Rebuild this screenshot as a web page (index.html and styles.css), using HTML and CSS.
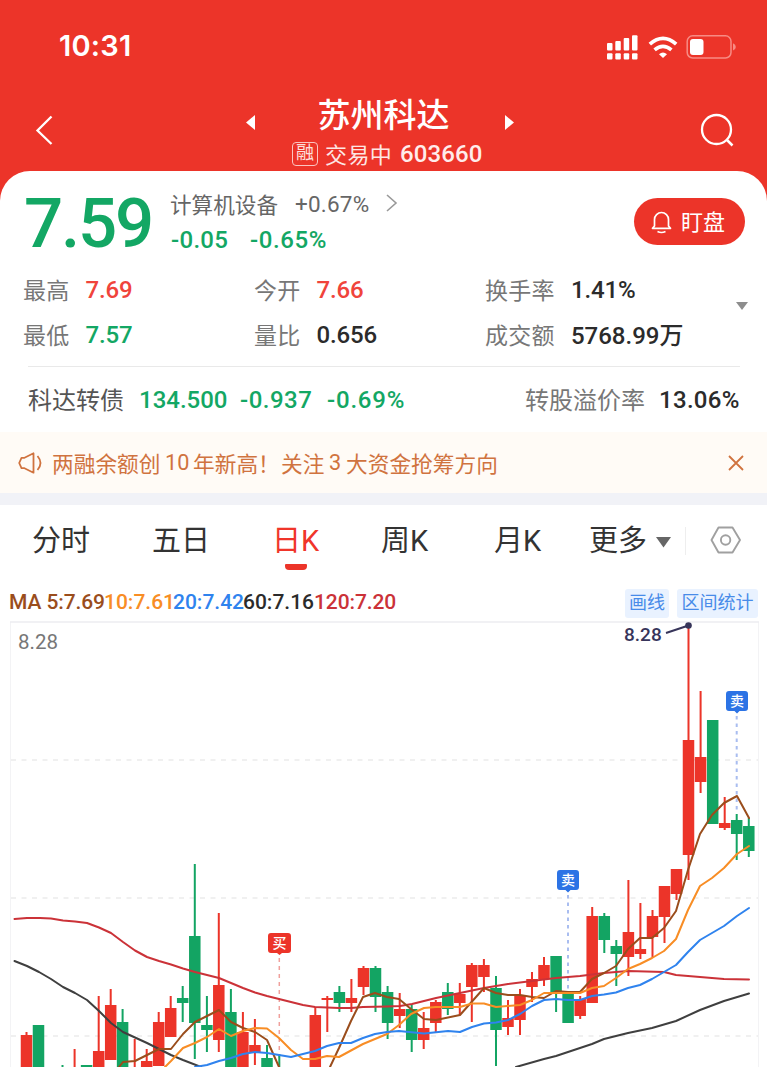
FILE: index.html
```
<!DOCTYPE html>
<html lang="zh-CN">
<head>
<meta charset="utf-8">
<title>苏州科达 603660</title>
<link rel="stylesheet" href="styles.css">
</head>
<body>
<div class="top">
  <div class="status">
    <span class="time">10:31</span>
    <svg class="status-icons" width="132" height="28" viewBox="604 32 132 28">
      <g fill="#fff">
        <rect x="607" y="42" width="5.5" height="7.5" rx="1"/><rect x="615.3" y="40" width="5.5" height="9.5" rx="1"/><rect x="623.7" y="37" width="5.5" height="12.5" rx="1"/><rect x="632" y="34.3" width="5.5" height="15.2" rx="1"/>
        <rect x="607" y="52.3" width="5.5" height="6.2" rx="1"/><rect x="615.3" y="52.3" width="5.5" height="6.2" rx="1"/><rect x="623.7" y="52.3" width="5.5" height="6.2" rx="1"/><rect x="632" y="52.3" width="5.5" height="6.2" rx="1"/>
        <path d="M659 53.2q4-3.4 8 0L663 57z"/>
        <rect x="690" y="38" width="13.5" height="16" rx="3"/>
      </g>
      <path d="M649.8 43.2q13.2-11.6 26.4 0M654.6 48.8q8.4-7 16.8 0" fill="none" stroke="#fff" stroke-width="3.7"/>
      <rect x="687.2" y="34.8" width="43.8" height="22.2" rx="5.5" fill="none" stroke="#f78b84" stroke-width="1.5"/>
      <path d="M733 42.3q2.8 1 2.8 3.6t-2.8 3.6z" fill="#f78b84"/>
    </svg>
  </div>
  <div class="nav">
    <svg class="back" width="20" height="32" viewBox="0 0 20 32"><path d="M16.500 2.500L2.500 16.500L16.500 30" fill="none" stroke="#fff" stroke-width="2.3"/></svg>
    <svg class="prev" width="9" height="16" viewBox="0 0 9 16"><path d="M9 0v15L0 7.500z" fill="#fff"/></svg>
    <div class="title">
      <div class="name">苏州科达</div>
      <div class="sub"><span class="badge">融</span><span class="state">交易中</span><span class="code">603660</span></div>
    </div>
    <svg class="next" width="9" height="16" viewBox="0 0 9 16"><path d="M0 0v15L9 7.500z" fill="#fff"/></svg>
    <svg class="search" width="34" height="34" viewBox="0 0 34 34"><circle cx="16.500" cy="16.500" r="14.500" fill="none" stroke="#fff" stroke-width="2.300"/><path d="M26.500 26.500l6 6" stroke="#fff" stroke-width="2.500"/></svg>
  </div>
  <div class="card">
    <div class="quote">
      <span class="price">7.59</span>
      <div class="info">
        <div class="line"><span class="sector">计算机设备</span><span class="sector-pct">+0.67%</span><svg class="more-arrow" width="12" height="18" viewBox="0 0 12 18"><path d="M1 1l9 8-9 8" fill="none" stroke="#999" stroke-width="1.600"/></svg></div>
        <div class="line green"><span class="chg">-0.05</span><span class="pct">-0.65%</span></div>
      </div>
      <div class="watch">
        <svg width="21" height="24" viewBox="0 0 21 24" fill="none" stroke="#fff" stroke-width="1.700"><path d="M3.500 16V9.500a7 7 0 0 1 14 0V16l2 2.300h-18z" stroke-linejoin="round"/><path d="M6.500 21.500q4 2 8 0"/></svg>
        <span class="watch-text">盯盘</span>
      </div>
    </div>
    <div class="stats">
      <div class="stat"><span class="lab">最高</span><span class="val red">7.69</span></div>
      <div class="stat"><span class="lab">今开</span><span class="val red">7.66</span></div>
      <div class="stat"><span class="lab">换手率</span><span class="val">1.41%</span></div>
      <div class="stat"><span class="lab">最低</span><span class="val green">7.57</span></div>
      <div class="stat"><span class="lab">量比</span><span class="val">0.656</span></div>
      <div class="stat"><span class="lab">成交额</span><span class="val amount">5768.99万</span></div>
      <svg class="expand" width="12" height="8" viewBox="0 0 12 8"><path d="M0 0h12L6 8z" fill="#8d8d8d"/></svg>
    </div>
    <div class="bond">
      <span class="bond-name">科达转债</span><span class="green b1">134.500</span><span class="green b2">-0.937</span><span class="green b3">-0.69%</span>
      <span class="premium">转股溢价率</span><span class="b4">13.06%</span>
    </div>
  </div>
</div>
<div class="notice">
  <svg class="horn" width="25" height="22" viewBox="0 0 25 22" fill="none" stroke="#d0733f" stroke-width="1.800" stroke-linejoin="round"><path d="M3.500 5.800h3L15.500 1.300v19.400L6.500 16.200h-3L1.200 11z"/><path d="M19.500 4q6 7 0 14"/></svg>
  <span class="notice-a">两融余额创</span><span class="notice-n">10</span><span class="notice-b">年新高！</span><span class="notice-c">关注</span><span class="notice-m">3</span><span class="notice-d">大资金抢筹方向</span>
  <svg class="close" width="16" height="16" viewBox="0 0 16 16"><path d="M1 1l14 14M15 1L1 15" stroke="#d0733f" stroke-width="1.800"/></svg>
</div>
<div class="tabs">
  <span class="tab t1">分时</span><span class="tab t2">五日</span><span class="tab t3 active">日K</span><span class="tab t4">周K</span><span class="tab t5">月K</span><span class="tab t6">更多</span>
  <svg class="caret" width="15" height="11" viewBox="0 0 15 11"><path d="M0 0h15L7.500 10.500z" fill="#666"/></svg>
  <i class="sep"></i>
  <svg class="gear" width="32" height="28" viewBox="0 0 32 28" fill="none" stroke="#a0a0a0" stroke-width="1.900" stroke-linejoin="round"><path d="M8.500 1.500h14L30 14l-7.500 12.500h-14L1.500 14z"/><circle cx="15.600" cy="14" r="4.700"/></svg>
</div>
<div class="ma">
  <span class="m5">MA 5:7.69</span><span class="m10">10:7.61</span><span class="m20">20:7.42</span><span class="m60">60:7.16</span><span class="m120">120:7.20</span>
  <span class="chip c1">画线</span><span class="chip c2">区间统计</span>
</div>
<svg class="chart" width="768" height="449" viewBox="0 618 768 449" fill="none">
  <path d="M10.500 1067V622M758.500 1067V622" stroke="#f3f3f5"/>
  <path d="M10 622H759" stroke="#ededf0" stroke-width="1.500"/>
  <path d="M11 760H758M11 898H758M11 1036H758" stroke="#ececec" stroke-width="1.500" stroke-dasharray="5 5.500"/>
  <path class="dash-buy" d="M279.300 958V1067"/>
  <path class="dash-sell" d="M568 895V992M736.700 716V812"/>
  <path class="wick up" d="M26.500 1032V1036M74.600 1049V1067M98.700 996V1052M110.700 989V1006M134.700 1039V1067M146.700 1049V1062M158.700 1012V1023M170.700 996V1009M218.800 913V1052M242.900 1012V1033M254.900 1019V1065M315.300 1007V1016M327.300 996V1032M351.400 979V1012M363.500 966V995M399.700 993V1028M423.700 1012V1049M435.800 1000V1032M459.800 983V1015M471.800 963V1022M483.900 959V992M508 1000V1035M520 989V1035M532 972V1002M544 957V986M580.200 996V1019M592.200 907V917M628.400 880V976M640.400 903V959M652.500 910V957M664.500 886V943M676.500 869V900M688.500 627V880M700.600 691V793M724.700 797V830"/>
  <path class="body up" d="M26.500 1035V1070M98.700 1051V1070M110.700 1005V1060M146.700 1061V1070M158.700 1022V1066M170.700 1008V1037M218.800 985V1040M242.900 1032V1070M254.900 1045V1053M315.300 1015V1070M327.300 998V1000M351.400 998V1003M363.500 968V987M399.700 1009V1016M423.700 1028V1040M435.800 1002V1023M459.800 994V1003M471.800 965V987M483.900 965V977M508 1018V1027M520 995V1020M532 979V987M544 965V979M580.200 999V1016M592.200 916V1003M628.400 932V957M640.400 949V954M652.500 916V937M664.500 886V917M676.500 869V894M688.500 740V855M700.600 757V782M724.700 823V828"/>
  <path class="wick down" d="M62.500 1065V1067M122.600 1009V1023M182.700 986V1022M194.800 864V1059M206.900 996V1052M230.900 989V1013M267 1045V1059M279.300 1054V1067M339.400 986V1012M375.500 966V1012M387.600 986V1039M411.700 1005V1052M447.800 983V1015M496 976V1066M556.100 956V1012M604.300 913V953M616.300 940V986M736.700 814V860M748.800 818V857"/>
  <path class="body down" d="M38.500 1025V1070M86.600 1065V1070M122.600 1022V1070M182.700 998V1003M194.800 936V1023M206.900 1025V1030M230.900 1012V1070M267 1058V1070M339.400 992V1003M375.500 968V997M387.600 992V1023M411.700 1009V1040M447.800 992V1009M496 988V1030M556.100 956V992M568.100 994V1023M604.300 916V940M616.300 946V954M712.700 720V824M736.700 820V834M748.800 826V851"/>
  <g class="lines">
    <polyline stroke="#3f3f3f" points="14.500,961 27,966 39,972 51,979 63,987 75,993 87,1000 99,1011 111,1023 123,1032 147,1043 159,1049 171,1055 183,1060 201,1067"/>
    <polyline stroke="#3f3f3f" points="516,1067 544,1059 556,1056 568,1052 592,1044 604,1039 628,1033 652,1028 676,1021 700,1010 724,1001 749,993.500"/>
    <polyline stroke="#cb3238" points="14.500,919 27,918 40,918 51,918.500 63,920.500 75,921.500 87,923 99,927.500 111,933 123,942 135,950.500 147,957 159,961 171,964.500 183,968.500 195,972 219,978 231,983 243,988 255,992.500 267,996 279,999 303,1005 315,1007 339,1008 351,1008 363,1007 387,1006.500 400,1006 412,1004 436,998 460,993 484,988 508,984 532,981 556,978 580,976 604,973 616,972 628,971 664,972 676,975 700,977 724,979 749,979.500"/>
    <polyline stroke="#9a4d1c" points="119,1067 123,1062 135,1061 147,1055 159,1049 171,1049 183,1034 195,1022 207,1016 219,1010 231,1022 243,1028 255,1032 267,1040 279,1067"/>
    <polyline stroke="#9a4d1c" points="330,1067 339,1048 351,1021 363,997 375,993 387,997 399,999 411,1009 424,1019 436,1020 460,1015 484,988 496,993 508,995 520,995 532,997 544,998 556,991 568,992 580,992 592,979 604,973 616,966 628,949 640,938 652,938 664,928 676,911 688,870 700,834 712,815 724,803 737,796 749,818"/>
    <polyline stroke="#f88d25" points="165,1067 171,1061 183,1048 195,1043 207,1037 219,1029 231,1036 243,1031 255,1028 267,1028.500 279,1038 291,1050 303,1059 315,1059 327,1056 339,1057 363,1044 387,1034 399,1025 411,1014 424,1008 436,1007 460,1007 472,1003.500 484,1003.500 496,1007 520,1005 532,1000 544,993 556,993 568,993 580,993 592,988 604,986 616,978 628,969 640,964 652,958 664,951 676,939 688,910 700,886 712,878 724,868 737,854 749,846"/>
    <polyline stroke="#2f83ee" points="195,1067 207,1065 219,1061 231,1058 243,1054 255,1052 267,1053 291,1057 315,1051 327,1046 339,1043 351,1043 363,1038 375,1034 387,1032 399,1031 424,1033.500 448,1031 460,1032 472,1027 484,1023.500 496,1022.500 508,1020 520,1014 532,1006 544,1000 556,999 568,1000 580,1000 592,996 604,994.500 616,992.500 628,988 640,985 652,979 664,972 676,965 688,952 700,940 724,926 737,916 749,908"/>
  </g>
  <path d="M666 633L688.500 625.500" stroke="#37355a" stroke-width="2"/><circle cx="688.500" cy="625.500" r="3.300" fill="#37355a"/>
  <g class="pin"><path d="M271 933h17q3 0 3 3v14q0 3-3 3h-6l-2.500 2-2.500-2h-6q-3 0-3-3v-14q0-3 3-3z" fill="#ec3429"/><text x="279.500" y="948">买</text></g>
  <g class="pin"><path d="M560 870h16q3 0 3 3v14q0 3-3 3h-5.500l-2.500 2.500-2.500-2.500H560q-3 0-3-3v-14q0-3 3-3z" fill="#2c73e5"/><text x="568" y="885">卖</text></g>
  <g class="pin"><path d="M729 691h16q3 0 3 3v14q0 3-3 3h-5.500l-2.500 2.500-2.500-2.500H729q-3 0-3-3v-14q0-3 3-3z" fill="#2c73e5"/><text x="737" y="706">卖</text></g>
  <text class="axis" x="18" y="649">8.28</text>
  <text class="peak" x="624" y="640.500">8.28</text>
</svg>
</body>
</html>
```

FILE: styles.css
```
* { box-sizing: border-box; }
body {
  margin: 0;
  width: 768px;
  height: 1067px;
  overflow: hidden;
  background: #fff;
  color: #2b2b2b;
  font-family: Roboto, "Noto Sans CJK SC", sans-serif;
  white-space: nowrap;
}
svg { display: block; flex: none; }
.green { color: #13a764; }
.red { color: #f0443b; }
.top { background: #ec3429; width: 767px; }

.status { height: 93px; display: flex; align-items: center; justify-content: space-between; padding: 0 31px 0 59px; color: #fff; }
.time { font: 600 29px/30px Inter, sans-serif; letter-spacing: 0.2px; padding-bottom: 1px; }

.nav { height: 78px; display: flex; align-items: flex-start; color: #fff; }
.back { margin: 21px 0 0 35px; }
.prev { margin: 22px 0 0 191px; }
.title { width: 192px; margin-left: 37px; }
.name { font: 500 33px/40px "Noto Sans CJK SC", sans-serif; text-align: center; margin-right: 9px; height: 44px; }
.sub { display: flex; align-items: center; height: 34px; }
.badge { width: 26px; height: 24px; border: 1.5px solid #fbc4c0; border-radius: 4px; font-size: 18px; line-height: 20px; text-align: center; color: #fde0de; }
.state { font-size: 22px; margin-left: 7px; color: #fde6e4; width: 75px; letter-spacing: 0.4px; padding-bottom: 3px; }
.code { font-weight: 500; font-size: 24px; color: #ffeceb; letter-spacing: 0.1px; }
.next { margin: 22px 0 0 21px; }
.search { margin: 20px 0 0 186px; }

.card { background: #fff; border-radius: 30px 30px 0 0; height: 261px; }
.quote { height: 97px; display: flex; padding: 16px 22px 0 24px; align-items: flex-start; }
.price { font-weight: 500; font-size: 69px; line-height: 74px; color: #13a764; width: 147px; letter-spacing: -2.2px; }
.line { display: flex; align-items: center; height: 36px; font-size: 22px; }
.sector { width: 125px; color: #666; font-size: 21.6px; margin-left: -1px; padding-bottom: 4px; }
.sector-pct { width: 92px; color: #666; font-size: 22.5px; letter-spacing: 0.2px; padding-bottom: 2px; }
.more-arrow { margin: 0 0 4px -1px; }
.chg { width: 79px; font-weight: 500; font-size: 24px; letter-spacing: 0.3px; padding-bottom: 2px; }
.pct { font-weight: 500; font-size: 24px; letter-spacing: 0.6px; padding-bottom: 2px; }
.watch { margin: 11px 0 0 auto; width: 111px; height: 47px; border-radius: 24px; background: #ec3429; color: #fff; display: flex; align-items: center; gap: 9px; padding-left: 17px; font-size: 22px; }
.watch-text { padding-bottom: 3px; }

.stats { position: relative; height: 98px; display: grid; grid-template-columns: 231px 231px 1fr; grid-template-rows: 45px 45px; padding-left: 23px; }
.stat { display: flex; align-items: center; gap: 16px; }
.lab { font-size: 23px; color: #777; letter-spacing: 0.3px; padding-bottom: 3px; }
.val { font-weight: 500; font-size: 24px; letter-spacing: -0.15px; padding-bottom: 1px; }
.amount { padding-bottom: 4px; letter-spacing: 0; }
.expand { position: absolute; left: 736px; top: 34px; }
.bond { height: 66px; margin: 0 27px 0 28px; border-top: 1.500px solid #e9e9e9; display: flex; align-items: center; font-weight: 500; font-size: 24px; }
.bond-name { font-weight: 400; color: #555; width: 111px; padding-bottom: 3px; }
.b1 { width: 101px; }
.b2 { width: 87px; letter-spacing: 0.5px; }
.b3 { width: 198px; letter-spacing: 0.8px; }
.b4 { letter-spacing: 0.3px; }
.premium { font-weight: 400; color: #777; width: 134px; padding-bottom: 3px; }

.notice { height: 73px; width: 767px; background: #fffbf6; border-bottom: 12px solid #f1f2f7; display: flex; align-items: center; padding: 0 23px 0 18px; color: #d0733f; font-size: 21.700px; }
.notice-a { margin-left: 9px; width: 113px; }
.notice-n { width: 28px; }
.notice-b { width: 88px; }
.notice-c { width: 48px; }
.notice-m { width: 17px; }
.close { margin-left: auto; }

.tabs { height: 83px; display: flex; align-items: flex-start; padding-left: 32px; font-size: 29px; line-height: 73px; }
.tab { color: #333; }
.t1 { width: 120px; }
.t2 { width: 120px; }
.t3 { width: 109px; }
.t4 { width: 113px; }
.t5 { width: 95px; }
.t6 { width: 67px; }
.active { position: relative; color: #f0352a; }
.active::after { content: ""; position: absolute; left: 13px; top: 59px; width: 22px; height: 6px; border-radius: 1px 1px 4px 4px; background: #ec3429; }
.caret { margin-top: 32px; }
.sep { width: 1px; height: 28px; background: #eee; margin: 22px 24px 0 14px; }
.gear { margin-top: 21px; }

.ma { height: 30px; display: flex; align-items: center; padding-left: 9px; font-weight: 500; font-size: 21px; }
.ma span:not(.chip) { padding-bottom: 2px; }
.m5 { width: 95px; color: #9a4d1c; letter-spacing: -0.1px; }
.m10 { width: 69px; color: #f88d25; }
.m20 { width: 70px; color: #2f83ee; }
.m60 { width: 71px; }
.m120 { color: #cb3238; width: 311px; letter-spacing: -0.1px; }
.chip { height: 29px; line-height: 27px; border-radius: 3px; background: #e9f2ff; color: #478be9; font-weight: 400; font-size: 18px; text-align: center; }
.c1 { width: 44px; margin-right: 8px; }
.c2 { width: 81px; }

.chart { overflow: hidden; }
.wick { stroke-width: 2; }
.body { stroke-width: 11.500; }
.up { stroke: #ec3429; }
.down { stroke: #13a463; }
.lines { stroke-width: 2; stroke-linejoin: round; stroke-linecap: round; }
.dash-buy { stroke: #f0a09c; stroke-width: 1.500; stroke-dasharray: 4 4; }
.dash-sell { stroke: #a9bdf0; stroke-width: 2; stroke-dasharray: 3.500 4; }
.pin text { fill: #fff; font: 500 14px "Noto Sans CJK SC", sans-serif; text-anchor: middle; }
.axis { fill: #777; font-size: 20.500px; }
.peak { fill: #37355a; font-size: 19px; font-weight: 500; }
```
